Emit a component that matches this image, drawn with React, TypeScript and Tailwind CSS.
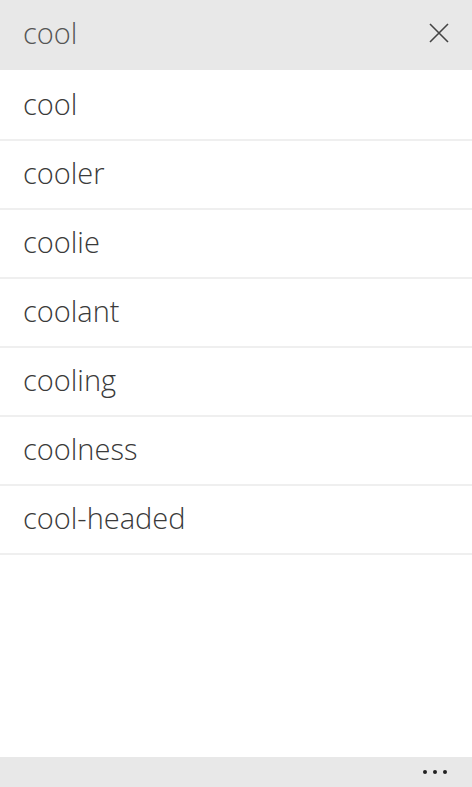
import * as React from "react";

const words = ["cool", "cooler", "coolie", "coolant", "cooling", "coolness", "cool-headed"];

export default function App() {
  return (
    <div
      className="w-[472px] h-[787px] flex flex-col bg-white overflow-hidden"
      style={{ fontFamily: '"Open Sans", "Noto Sans", sans-serif' }}
    >
      <div className="h-[70px] shrink-0 bg-[#e8e8e8] flex items-center justify-between pl-[23px] pr-[22px]">
        <span className="text-[29px] font-light text-[#555] leading-none -mt-[6px]">cool</span>
        <svg width="22" height="22" viewBox="0 0 22 22" className="-mt-[4px]">
          <path d="M2 2 L20 20 M20 2 L2 20" stroke="#444" strokeWidth="1.6" fill="none" />
        </svg>
      </div>
      <div className="flex-1 flex flex-col pt-[2px]">
        {words.map((w) => (
          <div
            key={w}
            className="h-[69px] shrink-0 border-b-2 border-[#efefef] flex items-center pl-[23px]"
          >
            <span className="text-[29px] font-light text-[#3a3a3a] leading-none -mt-[4px]">{w}</span>
          </div>
        ))}
      </div>
      <div className="h-[30px] shrink-0 bg-[#e8e8e8] flex items-center justify-end pr-[25px] gap-[6px]">
        <span className="w-[4px] h-[4px] rounded-full bg-[#222]" />
        <span className="w-[4px] h-[4px] rounded-full bg-[#222]" />
        <span className="w-[4px] h-[4px] rounded-full bg-[#222]" />
      </div>
    </div>
  );
}
